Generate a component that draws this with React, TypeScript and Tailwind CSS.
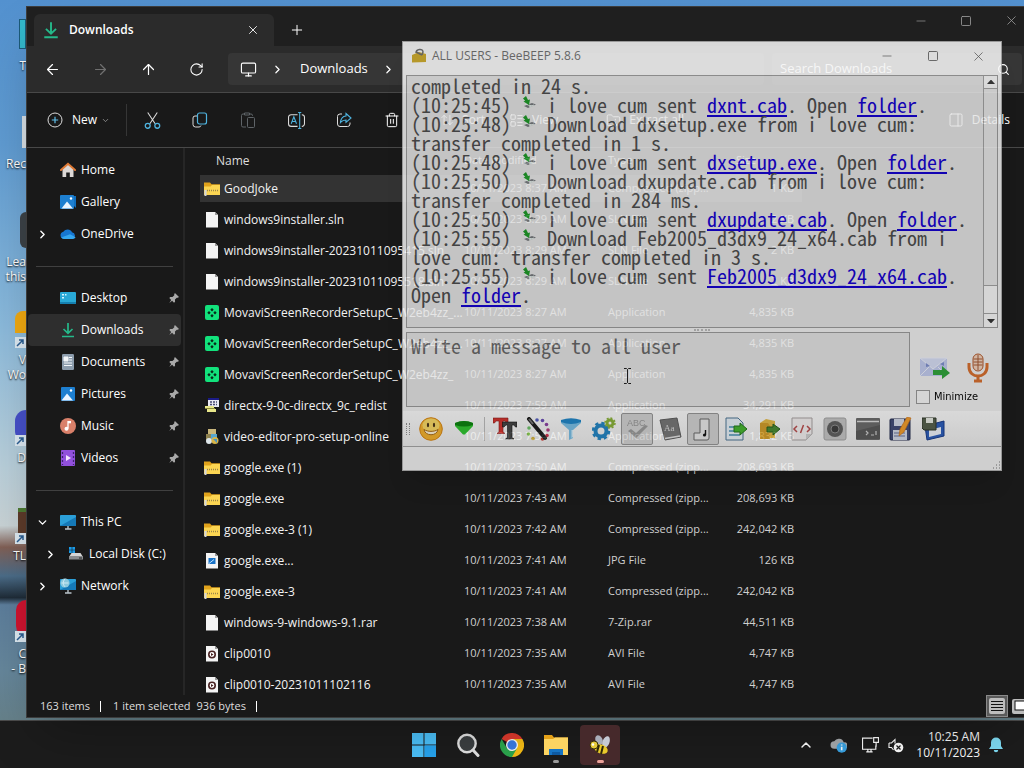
import React from 'react';
import {
  ArrowLeft, ArrowRight, ArrowUp, ChevronDown, ChevronRight, ChevronUp, Minus, Monitor,
  Plus, RotateCw, Search, Square, Trash2, X, ArrowUpDown, LayoutList, FolderArchive, PanelRight,
} from 'lucide-react';

type Children = { children?: React.ReactNode; className?: string };

const Svg = ({ children, className = 'size-4', box = 16 }: Children & { box?: number }) => (
  <svg viewBox={`0 0 ${box} ${box}`} className={className} fill="none" aria-hidden="true">
    {children}
  </svg>
);

/* ---------- file and navigation icons ---------- */

const DownloadIcon = ({ className }: { className?: string }) => (
  <Svg className={className}>
    <path d="M8 1v10M3.500 7 8 11.300 12.500 7M2 14.500h12" stroke="#25b98a" strokeWidth="1.700" />
  </Svg>
);

const HomeIcon = () => (
  <Svg>
    <path d="M2.500 7 8 2.500 13.500 7v8H9.800v-4.500H6.200V15H2.500z" fill="#dcd8d6" />
    <path d="M1 8 8 1.800 15 8" stroke="#e07a35" strokeWidth="2" strokeLinecap="round" />
  </Svg>
);

const PictureIcon = ({ stacked }: { stacked?: boolean }) => (
  <Svg>
    {stacked && <path d="M4 2h12v12z" fill="#0f6fc0" />}
    <rect x={stacked ? 0 : 1} y="1" width="14" height="14" rx="1" fill="#1d7fd0" />
    <path d="M1.500 14.500 7 7.500l6 7z" fill="#eaf5ff" />
    <circle cx="11" cy="4.500" r="1.200" fill="#fff" />
  </Svg>
);

const CloudIcon = () => (
  <Svg>
    <path d="M4 13a3.700 3.700 0 0 1-.6-7.300A5 5 0 0 1 12 6.200 3.500 3.500 0 0 1 12.500 13z" fill="#1677d2" />
    <path d="M4 13a3.600 3.600 0 0 1-2.800-1.500L10 8.200l5.600 3A3.300 3.300 0 0 1 12.500 13z" fill="#35a7f0" />
  </Svg>
);

const DesktopIcon = () => (
  <Svg>
    <rect x="0" y="2" width="16" height="12" rx="1" fill="#29a9d6" />
    <path d="M0 12h16v1a1 1 0 0 1-1 1H1a1 1 0 0 1-1-1z" fill="#1580b0" />
    <path d="M2 4h2v1.500H2zM2 7h2v1.500H2zM5 4h1.500v1.500H5z" fill="#d5f6ff" />
  </Svg>
);

const DocumentIcon = () => (
  <Svg>
    <rect x="2" y="0" width="12" height="16" rx="1.200" fill="#8d9dad" />
    <path d="M4 3h4v4H4zM9 3.500h3M9 6h3M4 9h8M4 11.500h8" fill="#f2f5f8" stroke="#f2f5f8" />
  </Svg>
);

const MusicIcon = () => (
  <Svg>
    <circle cx="8" cy="8" r="8" fill="#d9806a" />
    <path d="M8 3v7.500" stroke="#fff" strokeWidth="1.300" />
    <path d="M8 3h3v2.300H8z" fill="#fff" />
    <circle cx="6.500" cy="10.800" r="2" fill="#fff" />
  </Svg>
);

const VideoIcon = () => (
  <Svg>
    <rect x="1" y="0" width="14" height="16" rx="1" fill="#9150dc" />
    <path d="M2.500 2v13M13.500 2v13" stroke="#3f2170" strokeWidth="1.300" strokeDasharray="2 2" />
    <path d="M6 5v6l5-3z" fill="#f4e5ff" />
  </Svg>
);

const PcIcon = ({ globe }: { globe?: boolean }) => (
  <Svg>
    <rect x="0" y="1" width="16" height="11" rx="0.800" fill="#2b9fd8" />
    <path d="M0 12 16 3v9z" fill="#1579b8" />
    <path d="M8 12v2.500M5 15h6.500" stroke="#b9c3ca" strokeWidth="1.400" />
    {globe && <circle cx="5" cy="5" r="4.600" fill="#8bc8dd" />}
    {globe && <path d="M1.500 5h7M5 .8c-2.500 3-2 6 0 8" stroke="#cdeaf4" />}
  </Svg>
);

const DiskIcon = () => (
  <Svg>
    <path d="M1 1h2.700v2.700H1zM4.300 1H7v2.700H4.300zM1 4.300h2.700V7H1zM4.300 4.300H7V7H4.300z" fill="#1a9be8" />
    <path d="M3.500 7h9l2.500 4H1z" fill="#d6d6d6" />
    <rect x="1" y="10" width="14" height="3.500" fill="#8a8d90" />
    <path d="M11 12h3" stroke="#222" />
  </Svg>
);

const PinIcon = () => (
  <Svg className="size-[10px]">
    <path d="m9.500 0 6.500 6.500-2 1.200-1.500-.2-3 3 .2 3.500-1.700 1.500L5 12.500.5 15.800l3-4.800L.5 8l1.500-1.700L5.500 6.500l3-3L8.300 1.800z" fill="#a9a9a9" />
  </Svg>
);

const ZipFolder = () => (
  <Svg>
    <path d="M0 1.500h6l1.500 1.800H16V14H0z" fill="#e0a21b" />
    <path d="M0 5.500h6.500L8 4h8v10H0z" fill="#fbd552" />
    <path d="M3 9.500h12" stroke="#9a854a" strokeWidth="1.500" strokeDasharray="1 1" />
    <path d="M1.500 9v6" stroke="#d4d7dc" strokeWidth="2" />
  </Svg>
);

const Paper = ({ kind }: { kind?: 'jpg' | 'avi' }) => (
  <Svg>
    <path d="M2 0h9l3 3v12.500H2z" fill="#f4f4f4" />
    <path d="M11 0v3h3z" fill="#9c9c9c" />
    {kind === 'jpg' && <path d="M4.500 5h7v6h-7z" fill="#1973c8" />}
    {kind === 'jpg' && <path d="m5 10.500 5-4" stroke="#bfe3ff" />}
    {kind === 'avi' && <circle cx="8" cy="8.500" r="3.200" fill="#fff" stroke="#4a2323" strokeWidth="1.600" />}
    {kind === 'avi' && <path d="M7 7v3l2.500-1.500z" fill="#4a2323" />}
  </Svg>
);

const MovaviIcon = () => (
  <Svg>
    <rect x="1" y="0" width="14" height="15" rx="2" fill="#12e27c" />
    <path d="m8 3 1.700 1.700L8 6.400 6.300 4.700zM8 9l1.700 1.700L8 12.400l-1.700-1.700zM5 6l1.700 1.700L5 9.400 3.300 7.700zM11 6l1.700 1.700L11 9.400 9.300 7.700z" fill="#06291a" />
  </Svg>
);

const DirectxIcon = () => (
  <Svg>
    <rect x="4" y="0" width="11" height="9" fill="#e9e9f4" />
    <path d="M4 1h11" stroke="#1b1b86" strokeWidth="2" />
    <path d="M6 4h7M6 6.500h7" stroke="#4a4a72" strokeWidth="1.500" strokeDasharray="2 1" />
    <path d="M1 8h9v2H1zM3 11h9v3H3z" fill="#e8e68a" />
    <path d="M1 10.500h10" stroke="#8a8a3a" />
  </Svg>
);

const SetupIcon = () => (
  <Svg>
    <path d="M4 0h8v6H4z" fill="#c9b67c" />
    <path d="M2 5h7v6H2z" fill="#8f8250" />
    <path d="M7 5h6v5H7z" fill="#58a6cf" />
    <circle cx="5" cy="12" r="3" fill="#dfe7ea" />
    <circle cx="11" cy="11.500" r="3.500" fill="#d8b548" />
    <path d="M9 10h4v4z" fill="#4a92bd" />
  </Svg>
);

/* ---------- explorer ---------- */

const SideItem = ({ icon, label, pin, active, chevron, nested }: {
  icon: React.ReactNode; label: string; pin?: boolean; active?: boolean; chevron?: 'right' | 'down'; nested?: boolean;
}) => (
  <li>
    <button className={`flex h-8 w-full items-center rounded-sm pr-[2px] text-left ${active ? 'bg-[#2e2e2e]' : ''} ${nested ? 'pl-4' : 'pl-2'}`}>
      <span className="flex w-6 items-center">
        {chevron === 'right' && <ChevronRight size={13} strokeWidth={2.5} />}
        {chevron === 'down' && <ChevronDown size={13} strokeWidth={2.5} />}
      </span>
      {icon}
      <span className="ml-[5px] flex-1 whitespace-nowrap text-xs">{label}</span>
      {pin && <PinIcon />}
    </button>
  </li>
);

const SideRule = () => <li className="flex h-8 items-center px-2"><hr className="w-full border-[#404040]" /></li>;

type Row = [React.ReactNode, string, string, string, string];

const ZIP = 'Compressed (zipp...';
const rows: Row[] = [
  [<ZipFolder />, 'GoodJoke', '8:37 AM', ZIP, '1 KB'],
  [<Paper />, 'windows9installer.sln', '8:29 AM', 'SLN File', '2 KB'],
  [<Paper />, 'windows9installer-20231011095415.sln', '8:29 AM', 'SLN File', '2 KB'],
  [<Paper />, 'windows9installer-20231011095518.sln', '8:29 AM', 'SLN File', '2 KB'],
  [<MovaviIcon />, 'MovaviScreenRecorderSetupC_W2eb4zz_...', '8:27 AM', 'Application', '4,835 KB'],
  [<MovaviIcon />, 'MovaviScreenRecorderSetupC_W2eb4zz_...', '8:27 AM', 'Application', '4,835 KB'],
  [<MovaviIcon />, 'MovaviScreenRecorderSetupC_W2eb4zz_', '8:27 AM', 'Application', '4,835 KB'],
  [<DirectxIcon />, 'directx-9-0c-directx_9c_redist', '7:59 AM', 'Application', '34,291 KB'],
  [<SetupIcon />, 'video-editor-pro-setup-online', '7:54 AM', 'Application', '1,832 KB'],
  [<ZipFolder />, 'google.exe (1)', '7:50 AM', ZIP, '208,693 KB'],
  [<ZipFolder />, 'google.exe', '7:43 AM', ZIP, '208,693 KB'],
  [<ZipFolder />, 'google.exe-3 (1)', '7:42 AM', ZIP, '242,042 KB'],
  [<Paper kind="jpg" />, 'google.exe...', '7:41 AM', 'JPG File', '126 KB'],
  [<ZipFolder />, 'google.exe-3', '7:41 AM', ZIP, '242,042 KB'],
  [<Paper />, 'windows-9-windows-9.1.rar', '7:38 AM', '7-Zip.rar', '44,511 KB'],
  [<Paper kind="avi" />, 'clip0010', '7:35 AM', 'AVI File', '4,747 KB'],
  [<Paper kind="avi" />, 'clip0010-20231011102116', '7:35 AM', 'AVI File', '4,747 KB'],
];

const FileTable = () => (
  <table className="ml-3 w-[602px] table-fixed border-separate border-spacing-0 whitespace-nowrap text-left text-[11px]">
    <colgroup>
      <col className="w-64" />
      <col className="w-36" />
      <col className="w-32" />
      <col />
    </colgroup>
    <thead>
      <tr className="h-[25px] text-[#dedede]">
        <th className="px-4 text-xs font-normal">Name</th>
        <th className="px-2 font-normal">Date modified</th>
        <th className="px-2 font-normal">Type</th>
        <th className="px-2 font-normal">Size</th>
      </tr>
    </thead>
    <tbody>
      {rows.map(([icon, name, time, type, size], i) => (
        <tr key={i} className={`h-[31px] text-[#d0d0d0] *:border-y-2 *:border-transparent *:bg-clip-padding *:p-0 ${i === 0 ? '*:bg-[#333333]' : ''}`}>
          <td className="text-xs text-[#f2f2f2]">
            <div className="flex items-center gap-1 pl-1">
              <span className="shrink-0">{icon}</span>
              <span>{name}</span>
            </div>
          </td>
          <td><span className="pl-2">10/11/2023 {time}</span></td>
          <td><span className="pl-2">{type}</span></td>
          <td className="text-right"><span className="pr-2">{size}</span></td>
        </tr>
      ))}
    </tbody>
  </table>
);

const NavButton = ({ label, children, className = '' }: Children & { label: string }) => (
  <button aria-label={label} className={`flex w-12 items-center justify-center ${className}`}>{children}</button>
);

const Explorer = () => (
  <section className="absolute top-[6px] right-0 bottom-[2px] left-[26px] flex flex-col overflow-hidden border border-[#3c3c3c] border-r-0 bg-[#191919] text-white shadow-2xl">
    <header className="flex h-[39px] shrink-0 items-end bg-[#1f1f1f] pl-[7px]">
      <div className="flex h-8 w-60 items-center rounded-t-md bg-[#2b2b2b] pr-[14px] pl-2">
        <DownloadIcon className="size-[18px]" />
        <span className="ml-[9px] flex-1 text-xs font-semibold">Downloads</span>
        <button aria-label="Close tab"><X size={14} strokeWidth={1.5} /></button>
      </div>
      <button aria-label="New tab" className="mb-2 ml-[15px]"><Plus size={16} strokeWidth={1.5} /></button>
      <div className="ml-auto flex self-start pt-[6px] text-[#9a9a9a]">
        <button aria-label="Minimize" className="w-[45px]"><Minus size={14} strokeWidth={1.2} className="mx-auto" /></button>
        <button aria-label="Maximize" className="w-[45px]"><Square size={12} strokeWidth={1.7} className="mx-auto" /></button>
        <button aria-label="Close" className="ml-[10px] w-[26px]"><X size={15} strokeWidth={1.3} className="mx-auto" /></button>
      </div>
    </header>

    <div className="flex h-[47px] shrink-0 items-center border-b border-[#484848] bg-[#2b2b2b] pl-px">
      <NavButton label="Back"><ArrowLeft size={17} strokeWidth={1.7} /></NavButton>
      <NavButton label="Forward" className="text-[#707070]"><ArrowRight size={17} strokeWidth={1.7} /></NavButton>
      <NavButton label="Up"><ArrowUp size={17} strokeWidth={1.7} /></NavButton>
      <NavButton label="Refresh"><RotateCw size={15} strokeWidth={1.7} /></NavButton>
      <div className="ml-2 flex h-8 flex-1 items-center rounded-sm bg-[#363636] pl-3">
        <Monitor size={17} strokeWidth={1.6} />
        <ChevronRight size={13} strokeWidth={2.2} className="ml-[14px]" />
        <span className="ml-4 text-[13px]">Downloads</span>
        <ChevronRight size={13} strokeWidth={2.2} className="ml-[14px]" />
      </div>
      <label className="mr-[2px] ml-2 flex h-8 w-[250px] items-center rounded-sm bg-[#363636] pr-3 pl-2">
        <input aria-label="Search Downloads" placeholder="Search Downloads" className="w-full bg-transparent text-[13px] outline-none placeholder:text-[#dcdcdc]" />
        <Search size={13} strokeWidth={2} className="shrink-0" />
      </label>
    </div>

    <div className="flex h-[55px] shrink-0 items-center border-b border-[#484848] pr-[14px] pl-5 text-xs">
      <button className="flex items-center">
        <Svg>
          <circle cx="8" cy="8" r="7" stroke="#dcdcdc" />
          <path d="M8 4.800v6.400M4.800 8h6.400" stroke="#5fbde8" strokeWidth="1.200" />
        </Svg>
        <span className="ml-[9px]">New</span>
        <ChevronDown size={9} className="ml-1 text-[#a0a0a0]" />
      </button>
      <span className="ml-4 h-8 w-px bg-[#363636]" />
      <div className="ml-px flex">
        <NavButton label="Cut">
          <Svg className="size-[17px]">
            <path d="m3.500.5 7 10.500M12.500.5 5.500 11" stroke="#dcdcdc" />
            <circle cx="3.500" cy="13" r="2.300" stroke="#4fb4e0" strokeWidth="1.200" />
            <circle cx="12.500" cy="13" r="2.300" stroke="#4fb4e0" strokeWidth="1.200" />
          </Svg>
        </NavButton>
        <NavButton label="Copy">
          <Svg>
            <path d="M5 4H3a2 2 0 0 0-2 2v6.500a2.500 2.500 0 0 0 2.500 2.500H7a2 2 0 0 0 2-1.500" stroke="#dcdcdc" />
            <rect x="5.500" y="1" width="9" height="11" rx="2" stroke="#4fb4e0" strokeWidth="1.200" />
          </Svg>
        </NavButton>
        <NavButton label="Paste">
          <Svg>
            <path d="M4 2H3a1.500 1.500 0 0 0-1.500 1.500v10A1.500 1.500 0 0 0 3 15h3M10 2h1a1.500 1.500 0 0 1 1.500 1.500V4M4.500 1h5v2h-5z" stroke="#5f6468" />
            <rect x="7.500" y="5.500" width="7" height="10" rx="1" stroke="#5f6468" />
          </Svg>
        </NavButton>
        <NavButton label="Rename">
          <Svg className="size-[17px]">
            <path d="M9 2.500H3A2.500 2.500 0 0 0 .5 5v6A2.500 2.500 0 0 0 3 13.500h6M13 2.500a2.500 2.500 0 0 1 2.500 2.500v6a2.500 2.500 0 0 1-2.500 2.500" stroke="#dcdcdc" />
            <path d="M11 .5v15M9.500.5h3M9.500 15.500h3M3 11l2.500-6.500L8 11M4 9h3" stroke="#4fb4e0" />
          </Svg>
        </NavButton>
        <NavButton label="Share">
          <Svg>
            <path d="M6 2H4a2.500 2.500 0 0 0-2.500 2.500v7.500A2.500 2.500 0 0 0 4 14.500h7.500A2.500 2.500 0 0 0 14 12v-1.500" stroke="#dcdcdc" />
            <path d="M10 1.500 15 6l-5 4.300V8C7.500 8 6 8.700 4.500 10.500 4.800 7 6.500 4.300 10 4z" stroke="#4fb4e0" strokeWidth="1.100" />
          </Svg>
        </NavButton>
        <NavButton label="Delete"><Trash2 size={16} strokeWidth={1.5} /></NavButton>
      </div>
      <button className="ml-6 flex items-center gap-2"><ArrowUpDown size={14} strokeWidth={1.5} />Sort</button>
      <button className="ml-6 flex items-center gap-2"><LayoutList size={15} strokeWidth={1.5} />View</button>
      <button className="ml-12 flex items-center gap-2"><FolderArchive size={15} strokeWidth={1.5} />Extract all</button>
      <button className="ml-auto flex items-center gap-2"><PanelRight size={16} strokeWidth={1.5} />Details</button>
    </div>

    <div className="flex min-h-0 flex-1 overflow-hidden">
      <nav className="w-[158px] shrink-0 border-r-2 border-[#262626] pl-px pr-[2px]">
        <ul className="pt-[6px]">
          <SideItem icon={<HomeIcon />} label="Home" />
          <SideItem icon={<PictureIcon stacked />} label="Gallery" />
          <SideItem icon={<CloudIcon />} label="OneDrive" chevron="right" />
          <SideRule />
          <SideItem icon={<DesktopIcon />} label="Desktop" pin />
          <SideItem icon={<DownloadIcon />} label="Downloads" pin active />
          <SideItem icon={<DocumentIcon />} label="Documents" pin />
          <SideItem icon={<PictureIcon />} label="Pictures" pin />
          <SideItem icon={<MusicIcon />} label="Music" pin />
          <SideItem icon={<VideoIcon />} label="Videos" pin />
          <SideRule />
          <SideItem icon={<PcIcon />} label="This PC" chevron="down" />
          <SideItem icon={<DiskIcon />} label="Local Disk (C:)" chevron="right" nested />
          <SideItem icon={<PcIcon globe />} label="Network" chevron="right" />
        </ul>
      </nav>
      <div className="min-w-0 flex-1 overflow-hidden pl-[3px]"><FileTable /></div>
    </div>

    <footer className="flex h-[22px] shrink-0 items-center pl-[13px] text-[11px] text-[#dedede]">
      <span>163 items</span>
      <span className="ml-[10px] h-[11px] w-px bg-white" />
      <span className="ml-3">1 item selected</span>
      <span className="ml-[6px]">936 bytes</span>
      <span className="ml-[10px] h-[11px] w-px bg-white" />
      <div className="ml-auto flex gap-1">
        <button aria-label="Details view" className="border border-[#8a8a8a] bg-[#5a5a5a] p-[2px]">
          <Svg>
            <rect width="16" height="16" rx="2" fill="#bdbdbd" />
            <path d="M2 3.500h12M2 6.500h12M2 9.500h12M2 12.500h12" stroke="#111" />
          </Svg>
        </button>
        <button aria-label="Large icons view" className="w-3 overflow-hidden">
          <Svg className="h-5 w-5" box={20}>
            <rect x="0" y="3" width="20" height="15" rx="2" fill="#bdbdbd" />
            <rect x="3" y="5" width="17" height="9" fill="#fff" stroke="#111" />
          </Svg>
        </button>
      </div>
    </footer>
  </section>
);

/* ---------- BeeBEEP chat window ---------- */

const TransferIcon = () => (
  <svg viewBox="0 0 16 16" className="inline-block size-4 align-top" fill="none" aria-hidden="true">
    <path d="m3 11 8-3 4 1.500L7 13z" fill="#75797c" />
    <path d="m4 9 7 2M8 12l5-2" stroke="#e8f2ee" />
    <path d="M2 3.500 5 1l2 4 2-.5L8 10 2.500 6.500l1.700-.7z" fill="#1d9a28" />
  </svg>
);

const FileLink = ({ children }: Children) => (
  <a href="#" className="text-[#1400d0] underline underline-offset-2 [text-decoration-skip-ink:none]">{children}</a>
);

const Sent = ({ time, file }: { time: string; file: string }) => (
  <p>({time}) <TransferIcon /> i love cum sent <FileLink>{file}</FileLink>. Open <FileLink>folder</FileLink>.</p>
);

const Got = ({ time, file, took }: { time: string; file: string; took: string }) => (
  <p>({time}) <TransferIcon /> Download {file} from i love cum: transfer completed in {took}.</p>
);

const Tool = ({ label, pressed, children }: Children & { label: string; pressed?: boolean }) => (
  <button
    aria-label={label}
    aria-pressed={pressed}
    className={`flex size-8 items-center justify-center rounded-xs border ${pressed ? 'border-[#979797] bg-[#d2d2d2]' : 'border-transparent'}`}
  >
    <Svg box={24} className="size-6">{children}</Svg>
  </button>
);

const Toolbar = () => (
  <div className="flex h-9 items-center gap-px border-b border-[#a6a6a6] bg-linear-to-b from-[#fdfdfd] to-[#ececec] pl-[3px]">
    <span className="mr-1 h-3 w-1 border-x border-dotted border-[#8e8e8e]" />
    <Tool label="Emoticons">
      <circle cx="12" cy="12" r="11.300" fill="#f5b22e" stroke="#d88614" />
      <ellipse cx="12" cy="8.500" rx="8.500" ry="7" fill="#fbd965" />
      <ellipse cx="9" cy="8" rx="1.100" ry="2.300" fill="#4a3418" />
      <ellipse cx="15" cy="8" rx="1.100" ry="2.300" fill="#4a3418" />
      <path d="M5 12.500c4 2.500 10 2.500 14 0-1 7-13 7-14 0z" fill="#fff4da" stroke="#a86a14" />
    </Tool>
    <Tool label="More">
      <path d="M3 6q9-4 18 0v3l-8 8.500h-2L3 9z" fill="#2fc42f" />
      <path d="M3 6q9-4 18 0v2q-9 3-18 0z" fill="#0b820f" />
    </Tool>
    <span className="mx-[3px] h-6 w-px bg-[#bcbcbc]" />
    <Tool label="Font">
      <path d="M0 1h15v5h-1.500L12 4h-2v11l2 1.500H4L6 15V4H3L1.500 6H0z" fill="#d3332e" stroke="#8b1c1a" strokeWidth=".6" />
      <path d="M9.500 5H24v5h-1.500L21 8h-2v12.500l2 1.500h-8.500l2-1.500V8H13l-2 2H9.500z" fill="#444" stroke="#111" strokeWidth=".6" />
    </Tool>
    <Tool label="Color">
      <circle cx="11" cy="3" r="1.800" fill="#5560c0" /><circle cx="16.500" cy="3.500" r="1.800" fill="#6a4db5" />
      <circle cx="20.500" cy="7.500" r="1.800" fill="#8c43a3" /><circle cx="22" cy="13" r="1.800" fill="#b23a7d" />
      <circle cx="21" cy="18.500" r="1.800" fill="#cf3350" /><circle cx="16.500" cy="22" r="1.800" fill="#d2433c" />
      <circle cx="3" cy="11" r="1.800" fill="#6fc36b" /><circle cx="2.500" cy="17" r="1.800" fill="#8cc850" />
      <circle cx="7" cy="21.500" r="1.800" fill="#d3b13c" />
      <path d="m3 2 16 19" stroke="#1c1c1c" strokeWidth="4" strokeLinecap="round" />
      <path d="m3 2 4 5" stroke="#757575" strokeWidth="2" />
    </Tool>
    <Tool label="Filter">
      <path d="M2 3h20v3l-8 7v8l-4 2V13L2 6z" fill="#79bfe6" />
      <path d="M12.500 13v8l1.500-1v-7z" fill="#d5eefa" />
      <path d="M2 3q10-3.500 20 0v2q-10 4-20 0z" fill="#1f86c8" />
    </Tool>
    <Tool label="Settings">
      <circle cx="9" cy="14" r="5.500" stroke="#2486c4" strokeWidth="4" />
      <circle cx="9" cy="14" r="8" stroke="#2486c4" strokeWidth="2.500" strokeDasharray="3.300 3" />
      <circle cx="18" cy="6" r="3" stroke="#8ab238" strokeWidth="3" />
      <circle cx="18" cy="6" r="5" stroke="#8ab238" strokeWidth="1.500" strokeDasharray="2 1.900" />
    </Tool>
    <Tool label="Spell check" pressed>
      <text x="2" y="9" fontSize="9" fill="#9a9a9a" className="font-['Liberation_Sans']">ABC</text>
      <path d="m3 14 8 7L23 9l-3-1-9 8-5-4z" fill="#9b9b9b" />
    </Tool>
    <Tool label="Dictionary">
      <path d="m2 3 17-2 4 19-16 3z" fill="#777" stroke="#5b5b5b" />
      <path d="M7 21.500 22 19" stroke="#e2e2e2" strokeWidth="1.500" />
      <text x="6" y="14" fontSize="9" fill="#ddd" className="font-['Liberation_Serif']">Aa</text>
    </Tool>
    <Tool label="Sounds" pressed>
      <path d="M9 2h9v19a2 2 0 0 1-2 2H3v-7h6z" fill="#e9e9e9" stroke="#6a6a6a" />
      <path d="M14.500 13v5" stroke="#111" strokeWidth="1.400" />
      <circle cx="13.500" cy="18" r="1.600" fill="#111" />
    </Tool>
    <Tool label="Send file">
      <path d="M2 1h12l5 5v17H2z" fill="#e8f1f8" stroke="#4d7695" />
      <path d="M5 10h11M5 14h11M5 18h11" stroke="#71a9c6" strokeWidth="2" />
      <path d="M10 9h6V6l7 6-7 6v-3h-6z" fill="#45b52f" stroke="#23791a" />
    </Tool>
    <Tool label="Send folder">
      <path d="M3 6 9 2l9 2v17H3z" fill="#e6bb46" />
      <path d="M3 6h8l2 3v13H3z" fill="#d39d2a" />
      <path d="M10 10h6V7l7 5-7 6v-3h-6z" fill="#4a8b32" stroke="#27601d" />
    </Tool>
    <Tool label="Source code">
      <path d="M2 1h20v16l-6 6H2z" fill="#f4f0f0" stroke="#a9a3a3" />
      <path d="M7 9 4 12l3 3M17 9l3 3-3 3M13.500 8l-3 8" stroke="#b94c4c" strokeWidth="1.500" />
      <path d="M16 23v-6h6z" fill="#cfcfcf" />
    </Tool>
    <Tool label="Speaker">
      <rect x="1" y="1" width="22" height="22" rx="2" fill="#c6c6c6" stroke="#a3a3a3" />
      <circle cx="12" cy="12" r="8" fill="#606060" />
      <circle cx="12" cy="12" r="4" fill="#3e3e3e" stroke="#8e8e8e" />
    </Tool>
    <Tool label="Console">
      <rect x="0" y="1" width="24" height="22" rx="1" fill="#6b6b6b" />
      <path d="M1 4.500h22" stroke="#dcdcdc" strokeWidth="1.500" />
      <path d="M0 14 24 8v14H0z" fill="#595959" />
      <path d="m10 14 2 2-2 2M15 18h3M20 14v4" stroke="#cfcfcf" strokeWidth="1.200" />
    </Tool>
    <Tool label="Edit and save">
      <rect x="1" y="2" width="20" height="21" rx="1" fill="#414c78" stroke="#232b4d" />
      <path d="M5 2h10v7H5zM4 13h14v10H4z" fill="#d4dae8" />
      <path d="M5 16h11M5 19h11" stroke="#68739b" />
      <path d="m22 1-4-1-7 12-1 7 5-4z" fill="#f39d2b" stroke="#c76c12" strokeWidth=".6" />
    </Tool>
    <Tool label="Save chat">
      <path d="M3 9 22 4v15L5 23z" fill="#2c5ebb" stroke="#173b8a" />
      <path d="m7 13 12-3v7L7 20z" fill="#eef3fb" />
      <path d="M0 1h14v12H2l-2-2z" fill="#55604c" stroke="#2e3729" />
      <path d="M4 1h7v5H4z" fill="#e9ece4" />
    </Tool>
  </div>
);

const CaptionButtons = () => (
  <div className="flex text-[#5a5a5a]">
    <button aria-label="Minimize chat" className="w-[46px]"><Minus size={14} strokeWidth={1.2} className="mx-auto" /></button>
    <button aria-label="Maximize chat" className="w-[45px]"><Square size={12} strokeWidth={1.7} className="mx-auto" /></button>
    <button aria-label="Close chat" className="w-[46px]"><X size={15} strokeWidth={1.2} className="mx-auto" /></button>
  </div>
);

const monoText = "font-['Noto_Sans_Mono_CJK_JP','Noto_Sans_CJK_JP',monospace] font-light [font-feature-settings:'hwid'] text-[20px] leading-[19px] text-[#4c4c4c]";

const BeeBeep = () => (
  <section className="absolute top-[41px] right-[22px] flex w-[600px] flex-col border border-[#b0b0b0] bg-[#f1f1f1] text-black opacity-85 shadow-xl">
    <header className="flex h-7 items-center bg-[#fbfbfb] pl-2">
      <Svg>
        <path d="M1 7 8 4l7 2v8l-14 .5z" fill="#ceaa29" />
        <path d="M5 5c0-4 7-5 7-1l-1 3M5 4l6 3" stroke="#6d6d6d" strokeWidth="1.500" />
      </Svg>
      <h1 className="ml-[5px] flex-1 text-xs text-[#707070]">ALL USERS - BeeBEEP 5.8.6</h1>
      <CaptionButtons />
    </header>
    <div className="flex flex-col bg-linear-to-b from-[#fbfbfb] to-[#f1f1f1] to-10% px-[3px] pt-[5px]">
      <div className="flex h-[253px] border border-[#9b9b9b] bg-[#e4e4e4]">
        <div className={`${monoText} flex-1 overflow-hidden pr-2 pl-1`}>
          <p>completed in 24 s.</p>
          <Sent time="10:25:45" file="dxnt.cab" />
          <Got time="10:25:48" file="dxsetup.exe" took="1 s" />
          <Sent time="10:25:48" file="dxsetup.exe" />
          <Got time="10:25:50" file="dxupdate.cab" took="284 ms" />
          <Sent time="10:25:50" file="dxupdate.cab" />
          <Got time="10:25:55" file="Feb2005_d3dx9_24_x64.cab" took="3 s" />
          <Sent time="10:25:55" file="Feb2005_d3dx9_24_x64.cab" />
        </div>
        <div className="flex w-[14px] flex-col border-l border-[#a2a2a2] bg-[#e8e8e8]">
          <button aria-label="Scroll up" className="flex h-[13px] items-center justify-center border-b border-[#a2a2a2] bg-[#f8f8f8]">
            <Svg className="h-1 w-2" box={8}><path d="M-4 8 4-1l8 9z" fill="#333" /></Svg>
          </button>
          <span className="flex-1" />
          <span className="h-7 border-t border-[#a2a2a2] bg-[#f8f8f8]" />
          <button aria-label="Scroll down" className="flex h-[14px] items-center justify-center border-t border-[#a2a2a2] bg-[#f8f8f8]">
            <Svg className="h-1 w-2" box={8}><path d="M-4 0 4 9l8-9z" fill="#333" /></Svg>
          </button>
        </div>
      </div>
      <div className="flex h-1 items-center justify-center"><span className="w-4 border-t-2 border-dotted border-[#bbbbbb]" /></div>
      <div className="flex h-[75px]">
        <textarea
          aria-label="Message"
          placeholder="Write a message to all user"
          className={`${monoText} w-[504px] resize-none border border-[#9b9b9b] bg-[#e4e4e4] px-1 pt-[3px] outline-none placeholder:text-[#666666]`}
        />
        <div className="flex flex-1 flex-col justify-end pl-[6px]">
          <div className="flex items-center gap-4 pl-[2px]">
            <button aria-label="Send message">
              <svg viewBox="0 0 32 28" className="h-7 w-8" fill="none">
                <path d="M2 4h27v18H2z" fill="#c3cdf0" />
                <path d="m2 4 13 11L29 4zM2 22l9-9M29 22l-9-9" stroke="#eef1fd" fill="#d8dff7" />
                <path d="M8 9v4l4-1zM22 10l4-2v4z" fill="#7f91cf" />
                <path d="M15 16h9v-4l8 7-8 6v-4h-9z" fill="#31a63b" />
              </svg>
            </button>
            <button aria-label="Record voice message">
              <svg viewBox="0 0 24 30" className="h-[30px] w-6" fill="none">
                <rect x="7" y="1" width="10" height="17" rx="5" fill="#f3d3bd" stroke="#b45a2c" />
                <path d="M7.500 6h9M7.500 9h9M7.500 12h9M12 2v15" stroke="#a65a35" />
                <path d="M3 10v4c0 12 18 12 18 0v-4" stroke="#d9702f" strokeWidth="3" />
                <path d="M12 22v5M8 28h8" stroke="#d9702f" strokeWidth="3" />
              </svg>
            </button>
          </div>
          <label className="mt-1 flex h-5 items-center gap-1 font-['DejaVu_Sans_Condensed','Noto_Sans',sans-serif] text-[11px]">
            <input type="checkbox" className="size-[14px] appearance-none border border-[#999999] bg-[#f8f8f8]" />
            Minimize
          </label>
        </div>
      </div>
    </div>
    <div className="pt-1"><Toolbar /></div>
    <footer className="flex h-[23px] items-end justify-end p-px">
      <Svg className="size-2" box={8}><path d="M1 7h1M4 7h1M7 7h1M4 4h1M7 4h1M7 1h1" stroke="#777" /></Svg>
    </footer>
  </section>
);

/* ---------- desktop ---------- */

const Shortcut = () => (
  <span className="absolute right-0 bottom-1 bg-[#dde9f2]">
    <Svg className="size-[11px]" box={11}><path d="M2 9 8 3M4 3h4v4" stroke="#2b5f94" strokeWidth="1.500" /></Svg>
  </span>
);

const DesktopItem = ({ label, swatch, link }: { label: string; swatch: string; link?: boolean }) => (
  <li className="flex h-[98px] flex-col items-end">
    <div className="relative flex h-12 w-full items-center justify-end">
      <span className={swatch} />
      {link && <Shortcut />}
    </div>
    <span className="whitespace-pre text-right text-xs leading-[15px] text-white [text-shadow:0_1px_2px_#000]">{label}</span>
  </li>
);

const Desktop = () => (
  <ul className="absolute inset-y-0 left-0 w-[26px] overflow-hidden pt-[10px]">
    <DesktopItem label="T" swatch="h-[30px] w-[7px] border border-[#1b5b79] bg-[#33b8cb]" />
    <DesktopItem label="Rec" swatch="h-8 w-1 bg-[#d7dfe4]" />
    <DesktopItem label={'Lea\nthis'} swatch="h-9 w-[6px] rounded-l-md bg-[#3c4247]" />
    <DesktopItem label={'V\nWo'} swatch="mb-3 h-[22px] w-[11px] rounded-tl-lg bg-[#f0a911]" link />
    <DesktopItem label="D" swatch="h-8 w-[11px] rounded-l-full bg-[#4650c9]" link />
    <DesktopItem label="TL" swatch="mb-1 h-7 w-2 border-t-4 border-[#4d7b33] bg-[#5d3b2a]" link />
    <DesktopItem label={'C\n- B'} swatch="mb-2 h-9 w-[10px] rounded-l-full bg-[#d01430]" link />
  </ul>
);

const Taskbar = () => (
  <footer className="grid h-12 shrink-0 grid-cols-[1fr_auto_1fr] items-center border-t border-[#4b4b4b] bg-[#1c1c1c] text-white">
    <span />
    <div className="flex items-center">
      <button aria-label="Start" className="flex size-11 items-center justify-center">
        <Svg className="size-6" box={24}>
          <path d="M0 0h11.500v11.500H0zM12.500 0H24v11.500H12.500zM0 12.500h11.500V24H0zM12.500 12.500H24V24H12.500z" fill="#4cc2fb" />
          <path d="M12.500 12.500H24V24H12.500z" fill="#27a6f2" />
        </Svg>
      </button>
      <button aria-label="Search" className="flex size-11 items-center justify-center">
        <Svg className="size-6" box={24}>
          <circle cx="11" cy="10.500" r="8.700" fill="#3c4042" stroke="#e4e4e4" strokeWidth="2.400" />
          <path d="m17 17 5 5.500" stroke="#e4e4e4" strokeWidth="3" strokeLinecap="round" />
        </Svg>
      </button>
      <button aria-label="Chrome" className="flex size-11 items-center justify-center">
        <Svg className="size-6" box={24}>
          <path d="M12 12 1.600 6a12 12 0 0 1 20.800 0z" fill="#e33b2e" />
          <path d="M12 12 22.400 6A12 12 0 0 1 12 24z" fill="#fbc116" />
          <path d="M12 6h10.400L12 24l5.200-9z" fill="#fbc116" />
          <path d="M12 24A12 12 0 0 1 1.600 6l5.200 9 5.200 3 5.200-3z" fill="#2da94f" />
          <circle cx="12" cy="12" r="6" fill="#fff" />
          <circle cx="12" cy="12" r="4.700" fill="#3b7de8" />
        </Svg>
      </button>
      <button aria-label="File Explorer" className="relative flex size-11 items-center justify-center">
        <Svg className="size-6" box={24}>
          <path d="M0 2h8l2 2.500h14V22H0z" fill="#e4a119" />
          <path d="M0 6h9l2-1.500h13V22H0z" fill="#fcd462" />
          <path d="M5 16h14v6H5z" fill="#1674c4" />
          <path d="M8 19h8v3H8z" fill="#0e59a0" />
        </Svg>
        <span className="absolute bottom-1 h-[3px] w-[6px] rounded-full bg-[#9a9a9a]" />
      </button>
      <button aria-label="BeeBEEP" className="relative flex h-10 w-11 items-center justify-center">
        <span className="flex h-10 w-10 items-center justify-center rounded-sm bg-[#46292b]">
          <Svg className="size-6" box={24}>
            <ellipse cx="11" cy="7" rx="3.500" ry="5" fill="#a9aeba" transform="rotate(-25 11 7)" />
            <ellipse cx="18" cy="9" rx="3.500" ry="6" fill="#c5cad4" transform="rotate(20 18 9)" />
            <ellipse cx="13" cy="16" rx="7" ry="4.500" fill="#e9c92b" transform="rotate(20 13 16)" />
            <path d="m11 12-2 7M15 13l-2 8" stroke="#2c2608" strokeWidth="2" />
            <circle cx="6" cy="12" r="4" fill="#e6cb3a" stroke="#37300e" />
            <circle cx="5" cy="11.500" r="1.200" fill="#fff" />
          </Svg>
        </span>
        <span className="absolute bottom-[2px] h-[3px] w-[7px] rounded-full bg-[#eca29a]" />
      </button>
    </div>
    <div className="flex items-center justify-end pr-5">
      <button aria-label="Show hidden icons"><ChevronUp size={16} strokeWidth={2.2} /></button>
      <Svg className="ml-4 size-[17px]">
        <path d="M4 12a3.500 3.500 0 0 1 0-7 5 5 0 0 1 9 1 3 3 0 0 1 1 6z" fill="#a9adb0" />
        <circle cx="11" cy="11" r="4.800" fill="#3aa5e6" />
        <path d="M11 10v3.500M11 8v1" stroke="#fff" strokeWidth="1.500" />
      </Svg>
      <Svg className="ml-[15px] size-[17px]">
        <path d="M10 2H.5v10.500H13V9M4 15h6M5.500 12.500V15M8.500 12.500V15M11 1.500h4.500V6H11zM13.300 6v4" stroke="#fff" strokeWidth="1.100" />
      </Svg>
      <Svg className="ml-[9px] size-4">
        <path d="M1 6h2.500L7 2.500v4M1 6v4.500h2.500L5.500 13" stroke="#fff" strokeWidth="1.100" />
        <circle cx="10.500" cy="10.500" r="4.800" fill="#fff" />
        <path d="m8.500 8.500 4 4M12.500 8.500l-4 4" stroke="#1c1c1c" strokeWidth="1.200" />
      </Svg>
      <time className="ml-3 text-right text-xs leading-4">10:25 AM<br />10/11/2023</time>
      <Svg className="ml-2 size-4">
        <path d="M8 .5a5 5 0 0 1 5 5V9l2 3H1l2-3V5.500a5 5 0 0 1 5-5zM5.800 13h4.400a2.200 2.200 0 0 1-4.400 0z" fill="#7fdcf4" />
      </Svg>
    </div>
  </footer>
);

export default function App() {
  return (
    <main className="flex h-screen min-h-[768px] w-full flex-col overflow-hidden bg-[#5b7d96] font-['Open_Sans','Noto_Sans',sans-serif]">
      <div className="relative flex-1 bg-[linear-gradient(180deg,#5391cf_0%,#5f9bd1_20%,#8ab9db_45%,#b9cfda_65%,#c8d2d5_73%,#805f55_76%,#4b6c88_80%,#1f2c38_83%,#5c7d9b_84%,#65869b_93%,#66818a_100%)]">
        <Desktop />
        <Explorer />
        <BeeBeep />
        <svg viewBox="0 0 9 16" className="pointer-events-none absolute top-[368px] right-[392px] h-4 w-[9px]" fill="none" aria-hidden="true">
          <path d="M1 .5h2.500l1 1 1-1H8M1 15.500h2.500l1-1 1 1H8M4.500 1.500v13" stroke="#1c1c1c" />
        </svg>
      </div>
      <Taskbar />
    </main>
  );
}
